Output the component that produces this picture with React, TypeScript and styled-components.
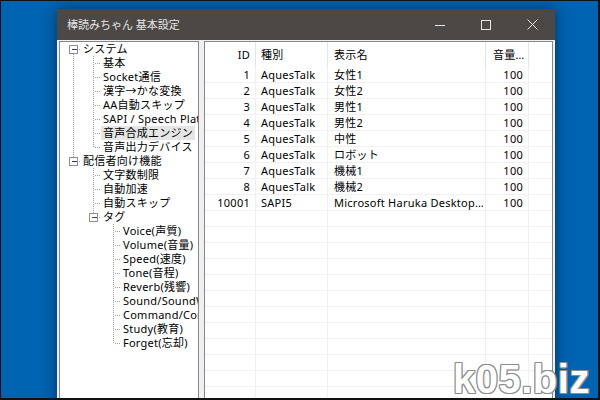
import React from "react";
import styled, { createGlobalStyle } from "styled-components";

const GlobalStyle = createGlobalStyle`
  html, body {
    margin: 0;
    padding: 0;
    background: #0063b1;
  }
  * {
    box-sizing: border-box;
  }
`;

const UI_FONT = `"Noto Sans", "Noto Sans CJK JP", "Liberation Sans", sans-serif`;

const Frame = styled.div`
  position: relative;
  width: 600px;
  height: 400px;
  overflow: hidden;
  background: #0063b1;
  border: 1px solid #111;
  border-bottom-width: 2px;
  border-right-width: 2px;
  padding: 8px 0 0 56px;
  font-family: ${UI_FONT};
  font-size: 11px;
  letter-spacing: 0.25px;
  color: #000;
`;

const Window = styled.div`
  width: 498px;
  height: 420px;
  display: flex;
  flex-direction: column;
  background: #f0f0f0;
  box-shadow: 0 0 14px rgba(0, 0, 0, 0.45);
`;

const TitleBar = styled.div`
  height: 31px;
  flex: none;
  display: flex;
  align-items: center;
  background: #4b4846;
  color: #e4e4e4;
`;

const Title = styled.div`
  flex: 1;
  padding-left: 10px;
  font-size: 11px;
  letter-spacing: 0;
  line-height: 31px;
`;

const CaptionButton = styled.div`
  width: 46px;
  height: 31px;
  display: flex;
  align-items: center;
  justify-content: center;
`;

const Body = styled.div`
  flex: 1;
  display: flex;
  gap: 5px;
  padding: 1px 2px 0 2px;
  min-height: 0;
`;

const TreePanel = styled.div`
  width: 140px;
  flex: none;
  background: #fff;
  border: 1px solid #828790;
  padding: 0 0 0 3px;
  overflow: hidden;
`;

const TreeRow = styled.div`
  height: 14px;
  display: flex;
  align-items: center;
  white-space: nowrap;
`;

const TreeLabel = styled.span<{ $selected?: boolean }>`
  padding: 0 2px;
  line-height: 14px;
  height: 14px;
  font-size: 11px;
  background: ${(p) => (p.$selected ? "#e5e5e5" : "transparent")};
`;

const ListPanel = styled.div`
  flex: 1;
  background: #fff;
  border: 1px solid #828790;
  overflow: hidden;
`;

const COLS = "51px 72px 158px 43px 1fr";

const HeaderRow = styled.div`
  display: grid;
  grid-template-columns: ${COLS};
  height: 25px;
`;

const HeaderCell = styled.div<{ $align?: "left" | "right"; $pad?: number; $last?: boolean }>`
  border-right: ${(p) => (p.$last ? "none" : "1px solid #e5e5e5")};
  line-height: 25px;
  text-align: ${(p) => p.$align ?? "left"};
  padding: ${(p) =>
    p.$align === "right" ? `0 ${p.$pad ?? 5}px 0 0` : `0 0 0 ${p.$pad ?? 5}px`};
  white-space: nowrap;
  overflow: hidden;
`;

const Grid = styled.div`
  display: grid;
  grid-template-columns: ${COLS};
  grid-auto-rows: 16px;
`;

const Cell = styled.div<{ $align?: "left" | "right"; $pad?: number; $last?: boolean }>`
  border-bottom: 1px solid #f0f0f0;
  border-right: ${(p) => (p.$last ? "none" : "1px solid #f0f0f0")};
  line-height: 15px;
  text-align: ${(p) => p.$align ?? "left"};
  padding: ${(p) =>
    p.$align === "right" ? `0 ${p.$pad ?? 5}px 0 0` : `0 0 0 ${p.$pad ?? 5}px`};
  white-space: nowrap;
  overflow: hidden;
  text-overflow: ellipsis;
`;

const Watermark = styled.div`
  position: absolute;
  left: 452px;
  top: 356px;
  font-family: "Liberation Sans", "DejaVu Sans", sans-serif;
  font-weight: bold;
  font-size: 40px;
  line-height: 44px;
  color: #fff;
  letter-spacing: 0.5px;
  text-shadow: -1px 0 #8c8c8c, 1px 0 #8c8c8c, 0 -1px #8c8c8c, 0 1px #8c8c8c,
    -1px -1px #8c8c8c, 1px 1px #8c8c8c, -1px 1px #8c8c8c, 1px -1px #8c8c8c;
  pointer-events: none;
`;

type Node = {
  label: string;
  level: number;
  guides: boolean[];
  first?: boolean;
  last?: boolean;
  box?: boolean;
  selected?: boolean;
};

const tree: Node[] = [
  { label: "システム", level: 0, guides: [], first: true, box: true },
  { label: "基本", level: 1, guides: [true] },
  { label: "Socket通信", level: 1, guides: [true] },
  { label: "漢字→かな変換", level: 1, guides: [true] },
  { label: "AA自動スキップ", level: 1, guides: [true] },
  { label: "SAPI / Speech Platform", level: 1, guides: [true] },
  { label: "音声合成エンジン", level: 1, guides: [true], selected: true },
  { label: "音声出力デバイス", level: 1, guides: [true], last: true },
  { label: "配信者向け機能", level: 0, guides: [], last: true, box: true },
  { label: "文字数制限", level: 1, guides: [false] },
  { label: "自動加速", level: 1, guides: [false] },
  { label: "自動スキップ", level: 1, guides: [false] },
  { label: "タグ", level: 1, guides: [false], last: true, box: true },
  { label: "Voice(声質)", level: 2, guides: [false, false] },
  { label: "Volume(音量)", level: 2, guides: [false, false] },
  { label: "Speed(速度)", level: 2, guides: [false, false] },
  { label: "Tone(音程)", level: 2, guides: [false, false] },
  { label: "Reverb(残響)", level: 2, guides: [false, false] },
  { label: "Sound/SoundWave(効果音)", level: 2, guides: [false, false] },
  { label: "Command/Command(コマンド)", level: 2, guides: [false, false] },
  { label: "Study(教育)", level: 2, guides: [false, false] },
  { label: "Forget(忘却)", level: 2, guides: [false, false], last: true },
];

const LINE = "#a0a0a0";

const TreeGuides = ({ node }: { node: Node }) => {
  const w = node.level * 20 + 18;
  const cx = node.level * 20 + 10.5;
  return (
    <svg width={w} height={14} style={{ flex: "none" }} shapeRendering="crispEdges">
      {node.guides.map((on, i) =>
        on ? (
          <line key={i} x1={i * 20 + 10.5} y1={0} x2={i * 20 + 10.5} y2={14} stroke={LINE} strokeDasharray="1 1" />
        ) : null
      )}
      {!node.first && <line x1={cx} y1={0} x2={cx} y2={7} stroke={LINE} strokeDasharray="1 1" />}
      {!node.last && <line x1={cx} y1={8} x2={cx} y2={14} stroke={LINE} strokeDasharray="1 1" />}
      <line x1={cx + 1} y1={7.5} x2={w} y2={7.5} stroke={LINE} strokeDasharray="1 1" />
      {node.box && (
        <g>
          <rect x={cx - 4} y={3.5} width={8} height={8} fill="#fff" stroke="#8e8f8f" />
          <line x1={cx - 2} y1={7.5} x2={cx + 3} y2={7.5} stroke="#2a3f7e" />
        </g>
      )}
    </svg>
  );
};

const rows = [
  ["1", "AquesTalk", "女性1", "100"],
  ["2", "AquesTalk", "女性2", "100"],
  ["3", "AquesTalk", "男性1", "100"],
  ["4", "AquesTalk", "男性2", "100"],
  ["5", "AquesTalk", "中性", "100"],
  ["6", "AquesTalk", "ロボット", "100"],
  ["7", "AquesTalk", "機械1", "100"],
  ["8", "AquesTalk", "機械2", "100"],
  ["10001", "SAPI5", "Microsoft Haruka Desktop - Japanese", "100"],
];

const EMPTY_ROWS = 12;

const App = () => {
  return (
    <>
      <GlobalStyle />
      <Frame>
        <Window>
          <TitleBar>
            <Title>棒読みちゃん 基本設定</Title>
            <CaptionButton>
              <svg width="10" height="10" shapeRendering="crispEdges">
                <line x1="0" y1="5.5" x2="10" y2="5.5" stroke="#e8e8e8" />
              </svg>
            </CaptionButton>
            <CaptionButton>
              <svg width="10" height="10" shapeRendering="crispEdges">
                <rect x="0.5" y="0.5" width="9" height="9" fill="none" stroke="#e8e8e8" />
              </svg>
            </CaptionButton>
            <CaptionButton>
              <svg width="11" height="11">
                <path d="M0.5 0.5 L10.5 10.5 M10.5 0.5 L0.5 10.5" stroke="#e8e8e8" strokeWidth="1" />
              </svg>
            </CaptionButton>
          </TitleBar>
          <Body>
            <TreePanel>
              {tree.map((n, i) => (
                <TreeRow key={i}>
                  <TreeGuides node={n} />
                  <TreeLabel $selected={n.selected}>{n.label}</TreeLabel>
                </TreeRow>
              ))}
            </TreePanel>
            <ListPanel>
              <HeaderRow>
                <HeaderCell $align="right">ID</HeaderCell>
                <HeaderCell>種別</HeaderCell>
                <HeaderCell $pad={6}>表示名</HeaderCell>
                <HeaderCell $pad={7}>音量…</HeaderCell>
                <HeaderCell $last />
              </HeaderRow>
              <Grid>
                {rows.map((r) => (
                  <React.Fragment key={r[0]}>
                    <Cell $align="right">{r[0]}</Cell>
                    <Cell>{r[1]}</Cell>
                    <Cell $pad={6}>{r[2]}</Cell>
                    <Cell $align="right">{r[3]}</Cell>
                    <Cell $last />
                  </React.Fragment>
                ))}
                {Array.from({ length: EMPTY_ROWS }).map((_, i) => (
                  <React.Fragment key={`e${i}`}>
                    <Cell />
                    <Cell />
                    <Cell />
                    <Cell />
                    <Cell $last />
                  </React.Fragment>
                ))}
              </Grid>
            </ListPanel>
          </Body>
        </Window>
        <Watermark>k05.biz</Watermark>
      </Frame>
    </>
  );
};

export default App;
